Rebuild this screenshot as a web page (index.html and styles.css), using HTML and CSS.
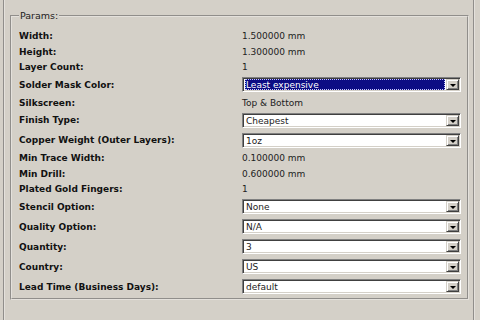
FILE: index.html
```html
<!DOCTYPE html>
<html lang="en">
<head>
  <meta charset="UTF-8">
  <meta name="viewport" content="width=device-width, initial-scale=1.0">
  <title>Params</title>
  <link rel="stylesheet" href="styles.css">
</head>
<body>
  <div class="frame">
    <fieldset class="group">
      <legend>Params:</legend>
      <div class="form">
        <div class="row"><span class="label">Width:</span><span class="value">1.500000 mm</span></div>
        <div class="row"><span class="label">Height:</span><span class="value">1.300000 mm</span></div>
        <div class="row"><span class="label">Layer Count:</span><span class="value">1</span></div>
        <div class="row tall">
          <span class="label">Solder Mask Color:</span>
          <div class="combo"><span class="text selected">Least expensive</span><span class="arrow"></span></div>
        </div>
        <div class="row"><span class="label">Silkscreen:</span><span class="value">Top &amp; Bottom</span></div>
        <div class="row tall">
          <span class="label">Finish Type:</span>
          <div class="combo"><span class="text">Cheapest</span><span class="arrow"></span></div>
        </div>
        <div class="row tall">
          <span class="label">Copper Weight (Outer Layers):</span>
          <div class="combo"><span class="text">1oz</span><span class="arrow"></span></div>
        </div>
        <div class="row"><span class="label">Min Trace Width:</span><span class="value">0.100000 mm</span></div>
        <div class="row"><span class="label">Min Drill:</span><span class="value">0.600000 mm</span></div>
        <div class="row"><span class="label">Plated Gold Fingers:</span><span class="value">1</span></div>
        <div class="row tall">
          <span class="label">Stencil Option:</span>
          <div class="combo"><span class="text">None</span><span class="arrow"></span></div>
        </div>
        <div class="row tall">
          <span class="label">Quality Option:</span>
          <div class="combo"><span class="text">N/A</span><span class="arrow"></span></div>
        </div>
        <div class="row tall">
          <span class="label">Quantity:</span>
          <div class="combo"><span class="text">3</span><span class="arrow"></span></div>
        </div>
        <div class="row tall">
          <span class="label">Country:</span>
          <div class="combo"><span class="text">US</span><span class="arrow"></span></div>
        </div>
        <div class="row tall">
          <span class="label">Lead Time (Business Days):</span>
          <div class="combo"><span class="text">default</span><span class="arrow"></span></div>
        </div>
      </div>
    </fieldset>
  </div>
</body>
</html>
```

FILE: styles.css
```css
body {
  margin: 0;
  background: #d4d0c8;
  font-family: "DejaVu Sans", sans-serif;
  font-size: 9px;
  color: #111;
}
.frame {
  height: 320px;
  box-sizing: border-box;
  margin: 0 5px 0 3px;
  padding: 10px 4px 0 5px;
  border-left: 2px groove #e4e1dc;
  border-right: 2px groove #e4e1dc;
}
.group {
  margin: 0;
  height: 290px;
  box-sizing: border-box;
  padding: 7px 6px 0 7px;
  border: 2px groove #e4e1dc;
}
.group legend {
  padding: 0 1px;
  margin-left: 0;
  line-height: 12px;
  font-size: 9.5px;
  color: #222;
}
.form {
  display: flex;
  flex-direction: column;
  gap: 1.5px;
}
.row {
  display: flex;
  align-items: center;
  height: 14px;
}
.row.tall {
  height: 18.5px;
}
.label {
  width: 223px;
  font-weight: bold;
}
.value {
  color: #222;
}
.combo {
  display: flex;
  width: 219px;
  height: 15px;
  box-sizing: border-box;
  background: #fff;
  border: 1px solid;
  border-color: #808080 #fff #fff #808080;
  box-shadow: inset 1px 1px #404040, inset -1px -1px #d4d0c8;
  padding: 1px 1px 1px 2px;
}
.combo .text {
  flex: 1;
  line-height: 12px;
  padding-left: 1px;
  color: #222;
}
.combo .text.selected {
  background: #0c0c84;
  color: #fff;
  outline: 1px dotted #c8c8ff;
  outline-offset: -1px;
  margin-right: 1px;
}
.arrow {
  position: relative;
  width: 13px;
  box-sizing: border-box;
  background: #d4d0c8;
  border: 1px solid;
  border-color: #d4d0c8 #404040 #404040 #d4d0c8;
  box-shadow: inset 1px 1px #fff, inset -1px -1px #808080;
}
.arrow::after {
  content: "";
  position: absolute;
  left: 3px;
  top: 4px;
  border-left: 3px solid transparent;
  border-right: 3px solid transparent;
  border-top: 3px solid #000;
}
```
